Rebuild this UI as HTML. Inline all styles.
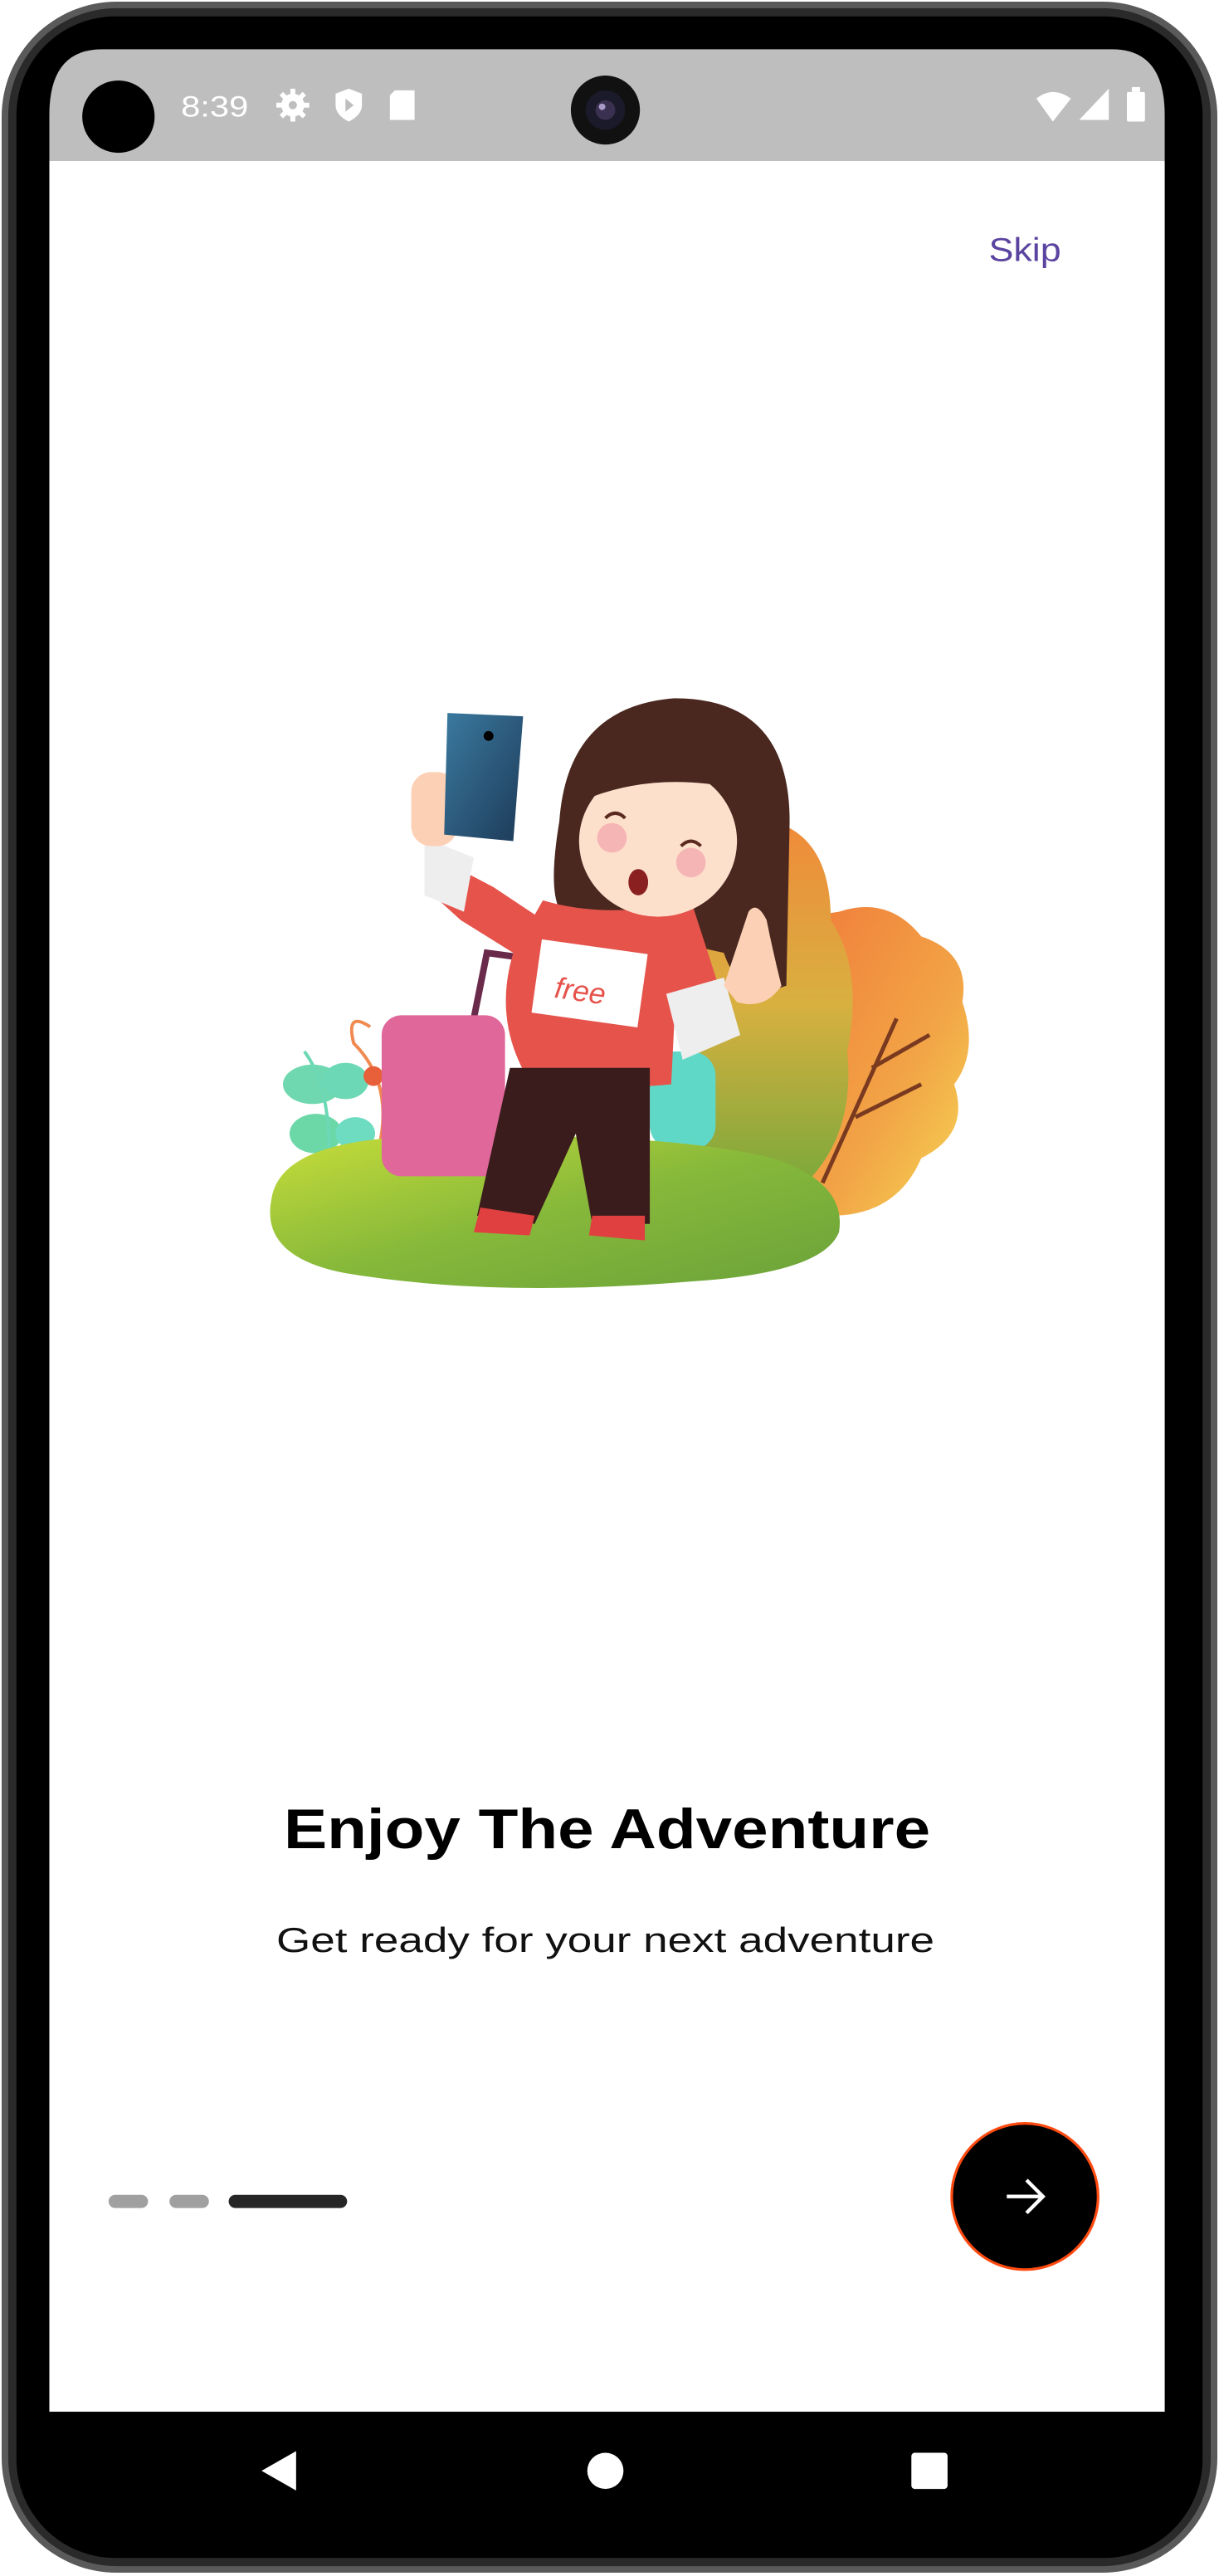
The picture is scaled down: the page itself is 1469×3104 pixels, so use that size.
<!DOCTYPE html>
<html><head><meta charset="utf-8"><style>
html,body{margin:0;padding:0;background:#fff;width:1469px;height:3104px;overflow:hidden}
svg{display:block}
text{font-family:"Liberation Sans",sans-serif}
</style></head><body>
<svg width="1469" height="3104" viewBox="0 0 741 1568" preserveAspectRatio="none" xmlns="http://www.w3.org/2000/svg">
<defs>
<linearGradient id="grass" x1="0" y1="0" x2="1" y2="1"><stop offset="0" stop-color="#c7dd3a"/><stop offset="0.5" stop-color="#86b83a"/><stop offset="1" stop-color="#6aa23a"/></linearGradient>
<linearGradient id="bush" x1="0" y1="0" x2="1" y2="1"><stop offset="0" stop-color="#f07a3a"/><stop offset="0.6" stop-color="#f2a446"/><stop offset="1" stop-color="#f5d855"/></linearGradient>
<linearGradient id="bush2" x1="0" y1="0" x2="0" y2="1"><stop offset="0" stop-color="#f08a3a"/><stop offset="0.5" stop-color="#d8b040"/><stop offset="1" stop-color="#7aa83a"/></linearGradient>
<linearGradient id="phone" x1="0" y1="0" x2="1" y2="1"><stop offset="0" stop-color="#3b7aa0"/><stop offset="1" stop-color="#1d3a58"/></linearGradient>
</defs>
<!-- phone body -->
<rect x="0" y="0" width="741" height="1568" fill="#fff"/>
<rect x="1" y="1" width="739" height="1565" rx="70" fill="#5a5a5a"/>
<rect x="5" y="5" width="731" height="1557" rx="66" fill="#2a2a2a"/>
<rect x="10" y="10" width="721" height="1547" rx="60" fill="#000"/>
<!-- status bar -->
<path d="M62 30 H676 Q708 30 708 70 V98 H30 V70 Q30 30 62 30 Z" fill="#bebebe"/>
<rect x="30" y="98" width="678" height="1370" fill="#fff"/>
<circle cx="72" cy="71" r="22" fill="#000"/>
<text x="110" y="71" font-size="18" fill="#fff" textLength="41" lengthAdjust="spacingAndGlyphs">8:39</text>
<circle cx="178" cy="64" r="7" fill="#fff"/><circle cx="178" cy="64" r="2.5" fill="#bebebe"/>
<path d="M178 54 v4 M178 70 v4 M168 64 h4 M184 64 h4 M171 57 l3 3 M182 68 l3 3 M185 57 l-3 3 M174 68 l-3 3" stroke="#fff" stroke-width="3"/>
<path d="M204 57 L212 54 L220 57 V64 Q220 70 212 74 Q204 70 204 64 Z" fill="#fff"/><path d="M210 60 L215 64 L210 68 Z" fill="#bebebe"/>
<path d="M240 55 H252 V73 H237 V58 Z" fill="#fff"/>
<circle cx="368" cy="67" r="21" fill="#111"/><circle cx="368" cy="67" r="12" fill="#1a1a2a"/><circle cx="368" cy="67" r="6" fill="#3a3050"/><circle cx="366" cy="65" r="2" fill="#a99ac8"/>
<path d="M630 60 Q640 52 651 60 L640 74 Z" fill="#fff"/>
<path d="M674 54 V73 H656 Z" fill="#fff"/>
<rect x="685" y="56" width="11" height="18" rx="1" fill="#fff"/><rect x="688" y="53" width="5" height="3" fill="#fff"/>
<!-- skip -->
<text x="601" y="159" font-size="20" fill="#5a44a0" textLength="44" lengthAdjust="spacingAndGlyphs">Skip</text>
<!-- illustration -->
<path d="M480 600 Q470 560 510 555 Q540 545 560 570 Q590 580 585 610 Q595 640 580 660 Q590 690 560 705 Q545 740 505 740 Q480 730 480 700 Z" fill="url(#bush)"/>
<path d="M420 560 Q440 500 470 500 Q505 510 505 560 Q525 590 515 640 Q520 690 490 720 Q450 730 425 700 Q405 660 420 620 Z" fill="url(#bush2)"/>
<path d="M500 720 L545 620 M520 680 L560 660 M530 650 L565 630" stroke="#7a3a20" stroke-width="2.5" fill="none"/>
<rect x="395" y="640" width="40" height="60" rx="15" fill="#60d8c8"/>
<ellipse cx="190" cy="660" rx="18" ry="12" fill="#6fd8b0"/><ellipse cx="210" cy="658" rx="14" ry="11" fill="#6dd8b5"/>
<ellipse cx="192" cy="690" rx="16" ry="12" fill="#6cd8a8"/><ellipse cx="216" cy="690" rx="12" ry="10" fill="#6ddcc0"/>
<path d="M185 640 Q200 660 200 700" stroke="#6dd8b5" stroke-width="2" fill="none"/>
<path d="M225 625 Q210 615 215 635 Q240 660 230 700" stroke="#f08a50" stroke-width="2" fill="none"/><circle cx="240" cy="632" r="8" fill="#f07a3a"/><circle cx="227" cy="655" r="6" fill="#e8603a"/>
<path d="M165 730 Q170 695 250 692 Q400 688 470 705 Q515 720 510 750 Q500 775 420 780 Q300 790 210 775 Q158 765 165 730 Z" fill="url(#grass)"/>
<!-- suitcase -->
<path d="M288 620 L296 580 L318 583" stroke="#6a2a4a" stroke-width="4" fill="none"/>
<rect x="232" y="618" width="75" height="98" rx="12" fill="#e0679a"/>
<!-- hair back -->
<path d="M340 500 Q345 430 410 425 Q480 425 480 500 L478 600 Q450 610 440 580 L350 560 Q330 560 340 500 Z" fill="#4a2820"/>
<!-- arm up -->
<path d="M262 520 L300 540 L330 560 L320 585 L280 560 L258 540 Z" fill="#e5534b"/>
<path d="M258 510 L288 522 L282 555 L258 545 Z" fill="#eee"/>
<rect x="250" y="470" width="28" height="45" rx="12" fill="#fcd0b5"/>
<path d="M272 434 L318 436 L312 512 L270 508 Z" fill="url(#phone)"/>
<circle cx="297" cy="448" r="3" fill="#000"/>
<!-- shirt -->
<path d="M330 548 Q370 560 420 548 L440 610 L410 620 L408 660 Q360 665 320 655 Q300 620 312 580 Z" fill="#e5534b"/>
<rect x="326" y="576" width="65" height="45" fill="#fff" transform="rotate(8 358 598)"/>
<text x="338" y="610" font-size="18" fill="#e5534b" transform="rotate(8 358 598)" font-style="italic">free</text>
<path d="M405 605 L440 595 L450 630 L415 645 Z" fill="#eee"/>
<path d="M440 600 Q450 570 455 555 Q460 548 466 560 Q470 580 475 600 Q465 615 448 610 Z" fill="#fcd0b5"/>
<!-- face -->
<ellipse cx="400" cy="512" rx="48" ry="46" fill="#fde0cc"/>
<path d="M355 470 Q380 440 450 455 L448 480 Q400 470 360 485 Z" fill="#4a2820"/>
<circle cx="372" cy="510" r="9" fill="#f5b5b5"/><circle cx="420" cy="525" r="9" fill="#f5b5b5"/>
<ellipse cx="388" cy="537" rx="6" ry="8" fill="#8a2020"/>
<path d="M368 498 q6 -6 12 0 M414 515 q6 -6 12 0" stroke="#5a2a20" stroke-width="2" fill="none"/>
<!-- pants -->
<path d="M310 650 L395 650 L395 745 L360 745 L350 690 L325 745 L290 740 Z" fill="#3a1c1c"/>
<path d="M292 735 L325 740 L322 752 L288 750 Z" fill="#e04040"/>
<path d="M360 740 L392 740 L392 755 L358 752 Z" fill="#e04040"/>
<!-- text -->
<text x="369" y="1125" font-size="34" font-weight="bold" fill="#000" text-anchor="middle" textLength="393" lengthAdjust="spacingAndGlyphs">Enjoy The Adventure</text>
<text x="368" y="1188" font-size="21" fill="#111" text-anchor="middle" textLength="400" lengthAdjust="spacingAndGlyphs">Get ready for your next adventure</text>
<!-- dots -->
<rect x="66" y="1336" width="24" height="8" rx="4" fill="#a0a0a0"/>
<rect x="103" y="1336" width="24" height="8" rx="4" fill="#a0a0a0"/>
<rect x="139" y="1336" width="72" height="8" rx="4" fill="#262626"/>
<!-- next button -->
<circle cx="623" cy="1337" r="44.5" fill="#000" stroke="#ff4a10" stroke-width="1.6"/>
<path d="M612 1337 H633 M624 1327 L634 1337 L624 1347" stroke="#fff" stroke-width="2.2" fill="none"/>
<!-- nav -->
<path d="M159 1504 L180 1492 V1516 Z" fill="#fff"/>
<circle cx="368" cy="1504" r="11" fill="#fff"/>
<rect x="554" y="1493" width="22" height="22" rx="2" fill="#fff"/>
</svg>
</body></html>
